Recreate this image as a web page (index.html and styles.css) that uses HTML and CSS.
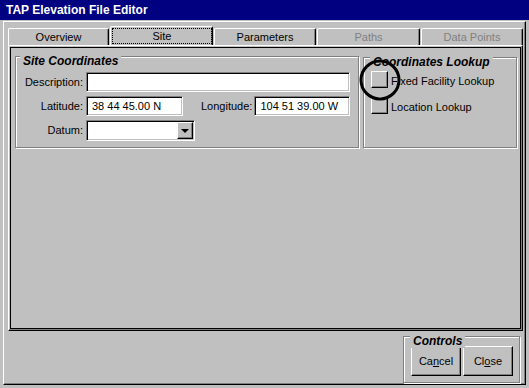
FILE: index.html
```html
<!DOCTYPE html>
<html lang="en">
<head>
  <meta charset="UTF-8">
  <title>TAP Elevation File Editor</title>
  <link rel="stylesheet" href="styles.css">
</head>
<body>

<div class="window">
  <div class="titlebar">TAP Elevation File Editor</div>

  <div class="client">
    <!-- tab strip -->
    <div class="tabs">
      <div class="tab tab-overview">Overview</div>
      <div class="tab tab-site active"><span class="focus">Site</span></div>
      <div class="tab tab-params">Parameters</div>
      <div class="tab tab-paths disabled">Paths</div>
      <div class="tab tab-points disabled">Data Points</div>
    </div>

    <div class="tab-panel">
      <div class="page">

        <div class="group site-group">
          <span class="legend">Site Coordinates</span>
          <div class="row">
            <span class="lbl">Description:</span>
            <div class="field desc-field"></div>
          </div>
          <div class="row">
            <span class="lbl">Latitude:</span>
            <div class="field lat-field">38 44 45.00 N</div>
            <span class="lbl-inline">Longitude:</span>
            <div class="field lon-field">104 51 39.00 W</div>
          </div>
          <div class="row">
            <span class="lbl">Datum:</span>
            <div class="field combo">
              <span class="drop-btn"><span class="arrow"></span></span>
            </div>
          </div>
        </div>

        <div class="group lookup-group">
          <span class="legend">Coordinates Lookup</span>
          <div class="check-row">
            <span class="check"></span>
            <span class="check-text">Fixed Facility Lookup</span>
          </div>
          <div class="check-row">
            <span class="check"></span>
            <span class="check-text">Location Lookup</span>
          </div>
        </div>

      </div>
    </div>

    <!-- alt butonlar -->
    <div class="bottom">
      <div class="group controls-group">
        <span class="legend">Controls</span>
        <button class="btn">Ca<u>n</u>cel</button>
        <button class="btn">Cl<u>o</u>se</button>
      </div>
    </div>
  </div>

  <svg class="marker" width="44" height="44" viewBox="0 0 44 44">
    <circle cx="22" cy="22" r="19" fill="none" stroke="#000" stroke-width="3"/>
  </svg>
</div>

</body>
</html>
```

FILE: styles.css
```css
* {
  box-sizing: border-box;
}

body {
  margin: 0;
  background-color: #c0c0c0;
  font-family: "Liberation Sans", Arial, sans-serif;
  font-size: 11px;
  color: #000;
}

.window {
  position: relative;
  width: 529px;
  height: 388px;
  background: #c0c0c0;
  overflow: hidden;
}

/* Başlık çubuğu */
.titlebar {
  height: 20px;
  background: #000080;
  color: #fff;
  font-weight: bold;
  font-size: 12px;
  line-height: 20px;
  padding-left: 6px;
}

.client {
  margin: 1px 0 0 3px;
  width: 523px;
  height: 364px;
  border: 1px solid;
  border-color: #fff #000 #000 #fff;
  box-shadow: inset -1px -1px 0 #808080;
  padding: 4px 0 0 4px;
  display: flex;
  flex-direction: column;
}

/* Sekmeler */
.tabs {
  display: flex;
  align-items: flex-end;
  gap: 1px;
  height: 19px;
}

.tab {
  height: 17px;
  border: 1px solid;
  border-bottom: none;
  border-color: #fff #000 #000 #fff;
  box-shadow: inset -1px 0 0 #808080;
  border-radius: 2px 2px 0 0;
  text-align: center;
  line-height: 16px;
}

.tab-overview { width: 101px; }
.tab-site { width: 103px; }
.tab-params { width: 102px; }
.tab-paths { width: 103px; }
.tab-points { width: 102px; }

.tab.active {
  height: 19px;
}

.tab .focus {
  display: block;
  margin: 1px 0 0 1px;
  height: 16px;
  border: 1px dotted #000;
  line-height: 15px;
}

.tab.disabled {
  color: #808080;
}

.tab-panel {
  width: 515px;
  height: 286px;
  border: 1px solid;
  border-color: #fff #000 #000 #fff;
  box-shadow: inset -1px -1px 0 #808080;
  padding: 1px;
}

.page {
  height: 100%;
  border: 1px solid #000;
  padding: 8px 0 0 4px;
  display: flex;
  align-items: flex-start;
  gap: 4px;
}

/* Grup kutuları */
.group {
  position: relative;
  border: 1px solid #808080;
  box-shadow: inset 1px 1px 0 #fff, 1px 1px 0 #fff;
}

.legend {
  position: absolute;
  top: -3px;
  left: 4px;
  padding: 0 3px;
  background: #c0c0c0;
  font-size: 12px;
  font-weight: bold;
  font-style: italic;
  line-height: 14px;
}

.site-group {
  width: 344px;
  height: 92px;
  padding-top: 15px;
  display: flex;
  flex-direction: column;
  gap: 4px;
}

.row {
  display: flex;
  align-items: center;
  height: 20px;
}

.lbl {
  width: 67px;
  margin-right: 3px;
  text-align: right;
}

.lbl-inline {
  margin: 0 2px 0 18px;
}

.field {
  height: 20px;
  background: #fff;
  border: 1px solid;
  border-color: #808080 #fff #fff #808080;
  box-shadow: inset 1px 1px 0 #000, inset -1px -1px 0 #c0c0c0;
  padding-left: 5px;
  line-height: 18px;
}

.desc-field { width: 264px; }
.lat-field { width: 97px; }
.lon-field { width: 96px; }

.combo {
  width: 109px;
  height: 21px;
  padding: 1px;
  display: flex;
  justify-content: flex-end;
}

.drop-btn {
  width: 16px;
  height: 17px;
  background: #c0c0c0;
  border: 1px solid;
  border-color: #fff #000 #000 #fff;
  box-shadow: inset -1px -1px 0 #808080;
  display: flex;
  align-items: center;
  justify-content: center;
}

.arrow {
  width: 0;
  height: 0;
  border-left: 4px solid transparent;
  border-right: 4px solid transparent;
  border-top: 4px solid #000;
  margin-top: 1px;
}

.lookup-group {
  width: 154px;
  height: 91px;
  margin-top: 1px;
  padding: 13px 0 0 7px;
  display: flex;
  flex-direction: column;
  gap: 9px;
}

.lookup-group .legend {
  left: 6px;
}

.check-row {
  display: flex;
  align-items: center;
  gap: 3px;
  height: 17px;
}

.check-text {
  padding-top: 2px;
}

.check {
  width: 17px;
  height: 17px;
  border: 1px solid;
  border-color: #fff #000 #000 #fff;
  box-shadow: inset -1px -1px 0 #808080;
}

/* Alt kısım */
.bottom {
  flex: 1;
  display: flex;
  justify-content: flex-end;
  padding: 5px 5px 0 0;
}

.controls-group {
  width: 117px;
  height: 47px;
  padding: 9px 0 0 7px;
  display: flex;
  gap: 2px;
}

.controls-group .legend {
  left: 6px;
}

.btn {
  width: 50px;
  height: 30px;
  background: #c0c0c0;
  border: 1px solid;
  border-color: #fff #000 #000 #fff;
  box-shadow: inset -1px -1px 0 #808080;
  font-family: "Liberation Sans", Arial, sans-serif;
  font-size: 11px;
  color: #000;
  padding: 0;
}

.marker {
  position: absolute;
  left: 358px;
  top: 58px;
}
```
